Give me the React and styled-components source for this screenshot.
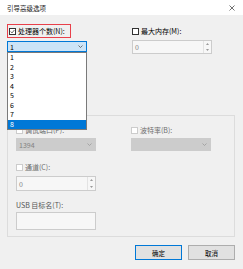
import React from 'react';
import styled, { createGlobalStyle } from 'styled-components';

const GlobalStyle = createGlobalStyle`
  html, body {
    margin: 0;
    padding: 0;
    background: #f0f0f0;
  }
  * {
    box-sizing: border-box;
  }
`;

const Dialog = styled.div`
  width: 243px;
  height: 269px;
  background: #f0f0f0;
  font-family: "Noto Sans CJK SC", "Noto Sans", sans-serif;
  font-size: 7px;
  color: #000;
  overflow: hidden;
`;

const TitleBar = styled.div`
  height: 15px;
  background: #fff;
  display: flex;
  align-items: center;
  justify-content: space-between;
  padding: 0 8px 0 7px;
  font-size: 6.5px;
  color: #222;
`;

const Body = styled.div`
  padding: 9px 8px 0 7px;
`;

const TopGrid = styled.div`
  display: grid;
  grid-template-columns: 80px 80px;
  column-gap: 45px;
`;

const Column = styled.div`
  position: relative;
  display: flex;
  flex-direction: column;
`;

const Highlight = styled.div`
  height: 14px;
  width: 64px;
  border: 1px solid #e8404a;
  display: flex;
  align-items: center;
  padding-left: 1px;
`;

const CheckRow = styled.div`
  height: 8px;
  display: flex;
  align-items: center;
  gap: 2px;
  margin-top: ${(p) => p.$top || 0}px;
  color: ${(p) => (p.$disabled ? '#6d6d6d' : '#000')};
  white-space: nowrap;
`;

const Box = styled.span`
  position: relative;
  width: 7px;
  height: 7px;
  flex: none;
  background: #fff;
  border: 1px solid ${(p) => (p.$disabled ? '#cccccc' : '#333')};

  svg {
    position: absolute;
    left: 0;
    top: 0;
  }
`;

const Combo = styled.div`
  height: ${(p) => p.$h}px;
  margin-top: ${(p) => p.$top}px;
  display: flex;
  align-items: center;
  justify-content: space-between;
  padding: 0 3px 0 2px;
  background: ${(p) => (p.$disabled ? '#cccccc' : '#cce4f7')};
  border: 1px solid ${(p) => (p.$disabled ? '#cccccc' : '#0078d7')};
  color: ${(p) => (p.$disabled ? '#838383' : '#000')};
`;

const Spinner = styled.div`
  height: ${(p) => p.$h}px;
  margin-top: ${(p) => p.$top}px;
  display: flex;
  border: 1px solid #cccccc;
  background: #f7f7f7;
  color: #838383;
`;

const SpinText = styled.div`
  flex: 1;
  display: flex;
  align-items: center;
  padding-left: 2px;
`;

const SpinArrows = styled.div`
  width: 8px;
  display: flex;
  flex-direction: column;
  justify-content: space-around;
  align-items: center;
  border-left: 1px solid #e3e3e3;
`;

const List = styled.div`
  position: absolute;
  left: 0;
  top: 28px;
  width: 80px;
  background: #fff;
  border: 1px solid #7a7a7a;
  z-index: 2;
`;

const ListItem = styled.div`
  height: 9.5px;
  line-height: 9.5px;
  padding-left: 2px;
  background: ${(p) => (p.$active ? '#0078d7' : '#fff')};
  color: ${(p) => (p.$active ? '#fff' : '#000')};
`;

const Group = styled.div`
  margin-top: 61px;
  width: 228px;
  height: 122px;
  border: 1px solid #dcdcdc;
  padding: 10px 8px 0 8px;
`;

const GroupGrid = styled.div`
  display: grid;
  grid-template-columns: 80px 80px;
  column-gap: 35px;
`;

const Label = styled.div`
  height: 8px;
  line-height: 8px;
  margin-top: ${(p) => p.$top}px;
  color: #555;
`;

const TextBox = styled.div`
  width: 80px;
  height: 18px;
  margin-top: 3px;
  border: 1px solid #cccccc;
  background: #f7f7f7;
`;

const Buttons = styled.div`
  margin-top: 8px;
  display: flex;
  justify-content: flex-end;
  gap: 6px;
`;

const Button = styled.div`
  width: 47px;
  height: 15px;
  display: flex;
  align-items: center;
  justify-content: center;
  background: #e1e1e1;
  border: ${(p) => (p.$primary ? '1.5px solid #0078d7' : '1px solid #adadad')};
  font-size: 6.5px;
`;

const Chevron = ({ color }) => (
  <svg width="5" height="3" viewBox="0 0 5 3">
    <path d="M0.5 0.5 L2.5 2.5 L4.5 0.5" fill="none" stroke={color} strokeWidth="0.8" />
  </svg>
);

const Arrow = ({ up }) => (
  <svg width="3" height="2" viewBox="0 0 3 2">
    <path d={up ? 'M0 2 L1.5 0 L3 2 Z' : 'M0 0 L1.5 2 L3 0 Z'} fill="#9a9a9a" />
  </svg>
);

const Check = () => (
  <svg width="5" height="5" viewBox="0 0 5 5">
    <path d="M0.7 2.5 L2 3.9 L4.4 1" fill="none" stroke="#222" strokeWidth="0.7" />
  </svg>
);

const Close = () => (
  <svg width="6" height="6" viewBox="0 0 6 6">
    <path d="M0.5 0.5 L5.5 5.5 M5.5 0.5 L0.5 5.5" stroke="#333" strokeWidth="0.7" />
  </svg>
);

const SpinBox = ({ h, top }) => (
  <Spinner $h={h} $top={top}>
    <SpinText>0</SpinText>
    <SpinArrows>
      <Arrow up />
      <Arrow />
    </SpinArrows>
  </Spinner>
);

const items = ['1', '2', '3', '4', '5', '6', '7', '8'];

export default function App() {
  return (
    <>
      <GlobalStyle />
      <Dialog>
        <TitleBar>
          <span>引导高级选项</span>
          <Close />
        </TitleBar>
        <Body>
          <TopGrid>
            <Column>
              <Highlight>
                <CheckRow>
                  <Box><Check /></Box>
                  <span>处理器个数(N):</span>
                </CheckRow>
              </Highlight>
              <Combo $h={11} $top={3}>
                <span>1</span>
                <Chevron color="#555" />
              </Combo>
              <List>
                {items.map((n) => (
                  <ListItem key={n} $active={n === '8'}>{n}</ListItem>
                ))}
              </List>
            </Column>
            <Column>
              <CheckRow $top={3}>
                <Box />
                <span>最大内存(M):</span>
              </CheckRow>
              <SpinBox h={14} top={5} />
            </Column>
          </TopGrid>

          <Group>
            <GroupGrid>
              <Column>
                <CheckRow $disabled>
                  <Box $disabled />
                  <span>调试端口(P):</span>
                </CheckRow>
                <Combo $disabled $h={13} $top={4}>
                  <span>1394</span>
                  <Chevron color="#9a9a9a" />
                </Combo>
                <CheckRow $disabled $top={12}>
                  <Box $disabled />
                  <span>通道(C):</span>
                </CheckRow>
                <SpinBox h={15} top={5} />
                <Label $top={10}>USB 目标名(T):</Label>
                <TextBox />
              </Column>
              <Column>
                <CheckRow $disabled>
                  <Box $disabled />
                  <span>波特率(B):</span>
                </CheckRow>
                <Combo $disabled $h={13} $top={4}>
                  <span />
                  <Chevron color="#9a9a9a" />
                </Combo>
              </Column>
            </GroupGrid>
          </Group>

          <Buttons>
            <Button $primary>确定</Button>
            <Button>取消</Button>
          </Buttons>
        </Body>
      </Dialog>
    </>
  );
}
